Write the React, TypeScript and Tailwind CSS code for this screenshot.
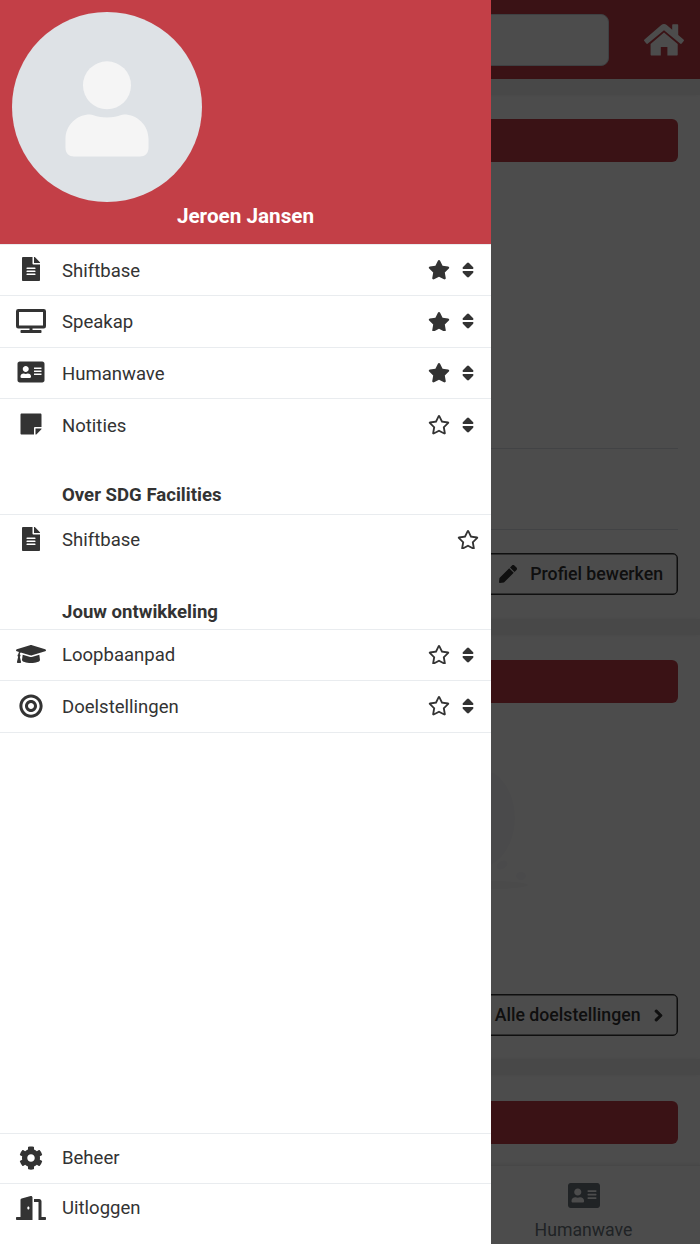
import { FaAddressCard, FaBullseye, FaChevronRight, FaCog, FaDoorOpen, FaFileAlt, FaGraduationCap, FaPen, FaRegStar, FaStar, FaStickyNote, FaTv } from "react-icons/fa";
import type { IconType } from "react-icons";
import clsx from "clsx";

type Item = { label: string; Icon: IconType; starred?: boolean; sortable?: boolean };

const MAIN: Item[] = [
  { label: "Shiftbase", Icon: FaFileAlt, starred: true, sortable: true },
  { label: "Speakap", Icon: FaTv, starred: true, sortable: true },
  { label: "Humanwave", Icon: FaAddressCard, starred: true, sortable: true },
  { label: "Notities", Icon: FaStickyNote, sortable: true },
];

const DEVELOPMENT: Item[] = [
  { label: "Loopbaanpad", Icon: FaGraduationCap, sortable: true },
  { label: "Doelstellingen", Icon: FaBullseye, sortable: true },
];

function SortIcon() {
  return (
    <svg viewBox="0 0 12 16" className="h-4 w-3 fill-current">
      <path d="M5 .9q1-.8 2 0l4.200 4.400q.8 1.300-.4 1.700H1.200Q0 6.600.8 5.300zM1.200 9h9.600q1.200.4.4 1.700L7 15.100q-1 .8-2 0L.8 10.700Q0 9.400 1.200 9z" />
    </svg>
  );
}

function MenuItem({ label, Icon, starred, sortable }: Item) {
  const Star = starred ? FaStar : FaRegStar;
  return (
    <li className="flex h-full items-center">
      <span className="mb-px flex w-[62px] justify-center">
        <Icon className="h-6 w-[30px]" />
      </span>
      <span className="mt-[1.500px] flex-1 text-[18.550px] leading-6">{label}</span>
      <button aria-label="Favoriet" className={clsx("flex w-[22px] justify-center", !sortable && "mr-3")}>
        <Star className="h-[19.500px] w-[22px]" />
      </button>
      {sortable && (
        <span className="mr-[17px] ml-3 flex w-3 justify-center">
          <SortIcon />
        </span>
      )}
    </li>
  );
}

function Avatar() {
  return (
    <div className="ml-3 flex size-[190px] items-center justify-center rounded-full bg-[#dee2e6]">
      <svg viewBox="0 0 84 96" className="mt-[3px] h-24 w-[84px] fill-[#f5f5f5]">
        <circle cx="42" cy="24.3" r="24" />
        <path d="M25 53.500C12 53.500.5 64 .5 78v9c0 5 3.500 8.500 8.500 8.500h66c5 0 8.500-3.500 8.500-8.500v-9c0-14-11.500-24.500-24.500-24.500-4 0-6 3-17 3s-13-3-17-3z" />
      </svg>
    </div>
  );
}

function HomeIcon() {
  return (
    <svg viewBox="0 0 40 32" className="h-8 w-10 fill-white">
      <path d="M20 0c1 0 1.900.4 2.700 1L28.200 5.700V1.200c0-.6.400-1 1-1h4c.6 0 1 .4 1 1v9.700l5.300 4.600c.6.500.6 1.100.2 1.600l-2 2.400c-.5.500-1.100.5-1.600.1L20 6.200 3.900 19.600c-.5.400-1.100.4-1.600-.1L.3 17.100c-.4-.5-.4-1.100.2-1.600L17.300 1c.8-.6 1.700-1 2.700-1z" />
      <path d="M20 8.500 33.700 20v10.600c0 .6-.4 1-1 1h-9.300v-8.700h-6.600v8.700H7.600c-.6 0-1-.4-1-1V20z" />
    </svg>
  );
}

function SectionBar() {
  return <div className="mr-[22.500px] h-[43px] shrink-0 rounded-r-md bg-[#c33f47]" />;
}

function Gap() {
  return <div className="h-4 shrink-0 bg-[#f2f2f2] shadow-[0_0_4px_rgba(0,0,0,0.06)]" />;
}

function Page() {
  return (
    <div className="flex h-full flex-col bg-white">
      <header className="flex h-[79px] shrink-0 items-center bg-[#c33f47]">
        <div className="h-[52px] w-[609px] rounded-lg border border-gray-300 bg-white" />
        <div className="ml-[35px]">
          <HomeIcon />
        </div>
      </header>
      <Gap />
      <section className="h-[524px] shrink-0 pt-6">
        <SectionBar />
        <div className="mt-[286px] mr-[22px] h-[82px] border-y border-[#dee2e6]" />
        <div className="mt-[23px] mr-[22px] flex justify-end">
          <button className="flex h-[42px] items-center rounded-[5px] border border-[#333] pr-[14px] pl-4 text-[17.700px] font-medium text-[#333] shadow-[inset_0_0_0_0.5px_#333]">
            <FaPen className="mr-[13px] size-[18px]" />
            Profiel bewerken
          </button>
        </div>
      </section>
      <Gap />
      <section className="h-[424px] shrink-0 pt-[25px]">
        <SectionBar />
        <div className="flex h-[290px] items-center">
          <svg viewBox="0 0 60 150" className="ml-[470px] h-[150px] w-[60px]">
            <ellipse cx="8" cy="45" rx="37" ry="50" fill="#f9f9fa" />
            <ellipse cx="20" cy="112" rx="38" ry="4" fill="#f7f7f8" />
            <ellipse cx="32" cy="92" rx="6" ry="4" fill="#f8f8fb" transform="rotate(-30 32 92)" />
            <ellipse cx="51" cy="103" rx="5" ry="4" fill="#f8f8fb" />
          </svg>
        </div>
        <div className="mt-[1px] mr-[22px] flex justify-end">
          <button className="flex h-[42px] items-center rounded-[5px] border border-[#333] pr-[12.500px] pl-4 text-[17.700px] font-medium text-[#333] shadow-[inset_0_0_0_0.5px_#333]">
            Alle doelstellingen
            <FaChevronRight className="ml-[11px] size-[13px]" stroke="currentColor" strokeWidth={40} />
          </button>
        </div>
      </section>
      <Gap />
      <section className="h-[90px] shrink-0 pt-[26px]">
        <SectionBar />
      </section>
      <footer className="flex flex-1 justify-end border-t border-[#eee] shadow-[0_-1px_4px_rgba(0,0,0,0.08)]">
        <div className="flex w-[233px] flex-col items-center pt-[15px] text-[#6c757d]">
          <FaAddressCard className="h-[29px] w-8" />
          <span className="mt-2 text-[17.700px] leading-6">Humanwave</span>
        </div>
      </footer>
    </div>
  );
}

export default function App() {
  return (
    <div className="relative h-[1244px] w-[700px] overflow-hidden font-[Roboto,sans-serif] text-[#333]">
      <Page />
      <div className="absolute inset-0 bg-black/70" />

      {/* Slide-out menu */}
      <aside className="absolute inset-y-0 left-0 flex w-[491px] flex-col bg-white">
        <div className="h-[243.500px] shrink-0 bg-[#c33f47] pt-3">
          <Avatar />
          <p className="text-center text-[20.700px] leading-7 font-bold text-white">Jeroen Jansen</p>
        </div>
        <ul className="grid h-[207px] grid-rows-4 divide-y divide-[#e9ecef] border-t border-[#e9ecef]">
          {MAIN.map((item) => (
            <MenuItem key={item.label} {...item} />
          ))}
        </ul>
        <h2 className="mt-8 h-8 border-b border-[#e9ecef] pl-[62px] text-[18.600px] leading-6 font-bold">Over SDG Facilities</h2>
        <ul className="h-[50px]">
          <MenuItem label="Shiftbase" Icon={FaFileAlt} />
        </ul>
        <h2 className="mt-[35px] h-[30px] border-b border-[#e9ecef] pl-[62px] text-[18.600px] leading-6 font-bold">Jouw ontwikkeling</h2>
        <ul className="grid h-[103px] grid-rows-2 divide-y divide-[#e9ecef] border-b border-[#e9ecef]">
          {DEVELOPMENT.map((item) => (
            <MenuItem key={item.label} {...item} />
          ))}
        </ul>
        <nav className="mt-auto h-[111px] text-[18.550px] leading-6">
          <a className="flex h-[50px] items-center border-t border-[#e9ecef] pb-[2px]">
            <span className="flex w-[62px] justify-center">
              <FaCog className="size-6" />
            </span>
            Beheer
          </a>
          <a className="flex h-[50px] items-center border-t border-[#e9ecef] pb-[2px]">
            <span className="flex w-[62px] justify-center">
              <FaDoorOpen className="h-6 w-[30px]" />
            </span>
            Uitloggen
          </a>
        </nav>
      </aside>
    </div>
  );
}
